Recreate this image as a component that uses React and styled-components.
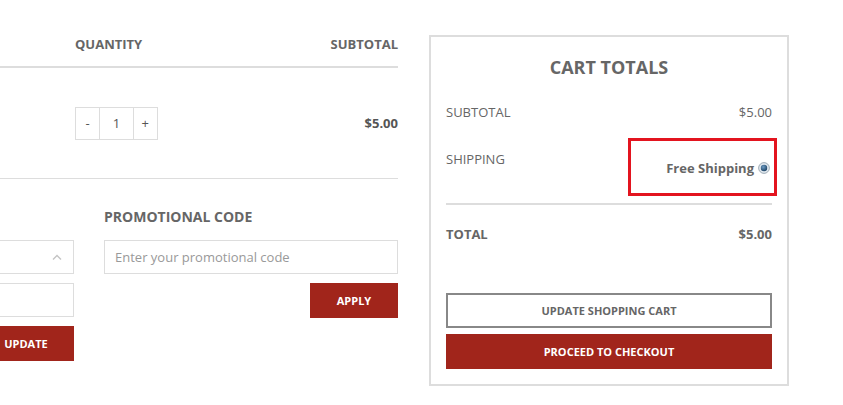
import styled, { createGlobalStyle } from "styled-components";

const GlobalStyle = createGlobalStyle`
  * { box-sizing: border-box; }
  html, body {
    margin: 0;
    background: #fff;
    overflow: hidden;
  }
  body {
    font-family: "Open Sans", "Liberation Sans", sans-serif;
    color: #555;
    font-size: 13px;
  }
`;

const RED = "#a1251b";

const Page = styled.div`
  display: flex;
  align-items: flex-start;
  gap: 31px;
  margin-left: -220px;
  padding-top: 35px;
`;

const CartColumn = styled.div`
  width: 618px;
  flex-shrink: 0;
`;

const TableRow = styled.div`
  display: grid;
  grid-template-columns: 295px 1fr auto;
  align-items: ${(p) => (p.$head ? "start" : "center")};
  height: ${(p) => (p.$head ? "33px" : "111px")};
  border-bottom: ${(p) => (p.$head ? "2px" : "1px")} solid #ddd;
`;

const HeadCell = styled.div`
  font-size: 13px;
  font-weight: 700;
  line-height: 18px;
  color: #666;
  text-transform: uppercase;
`;

const Qty = styled.div`
  display: flex;
  width: 83px;
  height: 33px;
  border: 1px solid #ddd;
`;

const QtyCell = styled.div`
  width: ${(p) => p.$w}px;
  display: flex;
  align-items: center;
  justify-content: center;
  color: #555;
  font-size: 13px;
  & + & { border-left: 1px solid #ddd; }
`;

const Price = styled.div`
  font-weight: 700;
  color: #555;
`;

const Forms = styled.div`
  display: grid;
  grid-template-columns: 294px 294px;
  gap: 30px;
  padding-top: 29px;
`;

const Form = styled.div`
  display: flex;
  flex-direction: column;
`;

const FormTitle = styled.h3`
  margin: 0 0 14px;
  min-height: 18px;
  font-size: 14px;
  line-height: 18px;
  font-weight: 700;
  color: #666;
`;

const Field = styled.div`
  display: flex;
  align-items: center;
  height: 34px;
  border: 1px solid #ddd;
  padding: 0 10px;
  margin-bottom: 9px;
  font-size: 13px;
  color: #999;
`;

const Chevron = styled.svg`
  margin-left: auto;
`;

const RedButton = styled.button`
  align-self: flex-end;
  width: ${(p) => p.$w || "100%"};
  height: 35px;
  border: 0;
  background: ${RED};
  color: #fff;
  font-family: inherit;
  font-size: 11px;
  font-weight: 700;
  text-transform: uppercase;
  cursor: pointer;
`;

const TotalsBox = styled.div`
  position: relative;
  width: 360px;
  height: 351px;
  flex-shrink: 0;
  border: 2px solid #ddd;
  padding: 18px 15px 15px;
  display: flex;
  flex-direction: column;
`;

const BoxTitle = styled.h2`
  margin: 0 0 23px;
  text-align: center;
  font-size: 18px;
  line-height: 24px;
  font-weight: 700;
  color: #666;
`;

const Line = styled.div`
  display: flex;
  justify-content: space-between;
  align-items: flex-start;
  line-height: 20px;
  margin-bottom: ${(p) => p.$mb || 0}px;
  font-weight: ${(p) => (p.$bold ? 700 : 400)};
  color: #666;
`;

const ShipValue = styled.label`
  display: flex;
  align-items: center;
  gap: 4px;
  padding-top: 9px;
  margin-right: 2px;
  font-weight: 700;
  color: #666;
`;

const Divider = styled.div`
  height: 2px;
  background: #ddd;
  margin: 25px 0 19px;
`;

const OutlineButton = styled.button`
  margin-top: auto;
  height: 35px;
  border: 2px solid #888;
  background: #fff;
  color: #666;
  font-family: inherit;
  font-size: 11px;
  font-weight: 700;
  text-transform: uppercase;
  margin-bottom: 6px;
`;

const Highlight = styled.div`
  position: absolute;
  left: 197px;
  top: 101px;
  width: 149px;
  height: 58px;
  border: 3px solid #e3141f;
  pointer-events: none;
`;

const Radio = () => (
  <svg width="12" height="12" viewBox="0 0 12 12">
    <defs>
      <radialGradient id="dot" cx="40%" cy="35%" r="70%">
        <stop offset="0%" stopColor="#6e9cc4" />
        <stop offset="100%" stopColor="#173d5f" />
      </radialGradient>
    </defs>
    <circle cx="6" cy="6" r="5.4" fill="#dfe7ee" stroke="#8c9aa6" strokeWidth="0.8" />
    <circle cx="6" cy="6" r="3.2" fill="url(#dot)" />
  </svg>
);

export default function App() {
  return (
    <>
      <GlobalStyle />
      <Page>
        <CartColumn>
          <TableRow $head>
            <div />
            <HeadCell>Quantity</HeadCell>
            <HeadCell>Subtotal</HeadCell>
          </TableRow>
          <TableRow>
            <div />
            <Qty>
              <QtyCell $w={24}>-</QtyCell>
              <QtyCell $w={34}>1</QtyCell>
              <QtyCell $w={25}>+</QtyCell>
            </Qty>
            <Price>$5.00</Price>
          </TableRow>
          <Forms>
            <Form>
              <FormTitle />
              <Field>
                <Chevron width="12" height="8" viewBox="0 0 12 8">
                  <path d="M2 6.5 L6 2.5 L10 6.5" fill="none" stroke="#c4c4c4" strokeWidth="1.4" />
                </Chevron>
              </Field>
              <Field />
              <RedButton $w="96px">Update</RedButton>
            </Form>
            <Form>
              <FormTitle>PROMOTIONAL CODE</FormTitle>
              <Field>Enter your promotional code</Field>
              <RedButton $w="88px">Apply</RedButton>
            </Form>
          </Forms>
        </CartColumn>

        <TotalsBox>
          <BoxTitle>CART TOTALS</BoxTitle>
          <Line $mb={27}>
            <span>SUBTOTAL</span>
            <span>$5.00</span>
          </Line>
          <Line>
            <span>SHIPPING</span>
            <ShipValue>
              Free Shipping
              <Radio />
            </ShipValue>
          </Line>
          <Divider />
          <Line $bold>
            <span>TOTAL</span>
            <span>$5.00</span>
          </Line>
          <OutlineButton>Update Shopping Cart</OutlineButton>
          <RedButton>Proceed to Checkout</RedButton>
          <Highlight />
        </TotalsBox>
      </Page>
    </>
  );
}
